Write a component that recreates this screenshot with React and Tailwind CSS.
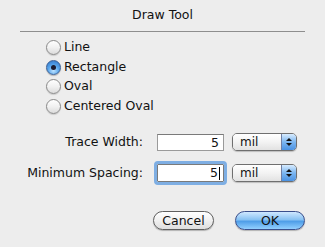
import React from 'react';

function Radio({ checked, label }) {
    return (
        <div className="flex items-center gap-[3px] h-[19.5px]">
            {checked ? (
                <span className="w-[15px] h-[15px] rounded-full border border-[#3a5f95] bg-[radial-gradient(circle_at_50%_75%,#bfe3ff_0%,#5aa7ec_45%,#2b6fc5_100%)] flex items-center justify-center shadow-[0_1px_1px_rgba(0,0,0,0.25)]">
                    <span className="w-[5px] h-[5px] rounded-full bg-[#1b1b30]" />
                </span>
            ) : (
                <span className="w-[15px] h-[15px] rounded-full border border-[#8a8a8a] bg-[linear-gradient(#ffffff,#f1f1f1_50%,#dcdcdc)] shadow-[0_1px_1px_rgba(0,0,0,0.15)]" />
            )}
            <span>{label}</span>
        </div>
    );
}

function Select() {
    return (
        <div className="flex w-[65px] h-[18px] rounded-[5px] border border-[#6f6f6f] overflow-hidden shadow-[0_1px_1px_rgba(0,0,0,0.2)]">
            <span className="flex-1 pl-[7px] text-[12px] leading-[16px] bg-[linear-gradient(#ffffff,#f3f3f3_50%,#e2e2e2)]">mil</span>
            <span className="w-[15px] flex flex-col items-center justify-center gap-[2px] border-l border-[#6f7fa5] bg-[linear-gradient(#d8ecff,#7cb6f0_50%,#4a92e3)]">
                <svg width="6" height="3" viewBox="0 0 6 3"><path d="M0 3L3 0L6 3Z" fill="#111" /></svg>
                <svg width="6" height="3" viewBox="0 0 6 3"><path d="M0 0L3 3L6 0Z" fill="#111" /></svg>
            </span>
        </div>
    );
}

export default function App() {
    return (
        <div className="w-[325px] h-[247px] bg-[#ededed] text-[#111] font-['Lucida_Grande','DejaVu_Sans',sans-serif] text-[12.5px] flex flex-col">
            <div className="text-center pt-[7px] h-[24px] leading-[16px]">Draw Tool</div>
            <div className="mx-[20px] mt-[7px] border-t border-[#8e8e8e]" />
            <div className="flex flex-col pl-[46px] mt-[6px]">
                <Radio label="Line" />
                <Radio label="Rectangle" checked />
                <Radio label="Oval" />
                <Radio label="Centered Oval" />
            </div>
            <div className="grid grid-cols-[143px_67px_65px] items-center gap-x-[14px] mt-[17px]">
                <div className="text-right">Trace Width:</div>
                <div className="h-[17px] border border-[#9a9a9a] border-t-[#7a7a7a] bg-white text-right pr-[4px] leading-[15px]">5</div>
                <div className="-ml-[6px]"><Select /></div>
            </div>
            <div className="grid grid-cols-[143px_67px_65px] items-center gap-x-[14px] mt-[12px]">
                <div className="text-right">Minimum Spacing:</div>
                <div className="h-[18px] border border-[#7a7a7a] bg-white text-right pr-[3px] leading-[16px] outline-[3px] outline-[#7eaee3] rounded-[1px] flex justify-end items-center">
                    <span>5</span><span className="w-px h-[13px] bg-black ml-px" />
                </div>
                <div className="-ml-[6px]"><Select /></div>
            </div>
            <div className="flex justify-end gap-[21px] pr-[20px] mt-[28px]">
                <button className="w-[61px] h-[19px] rounded-full border border-[#5f5f5f] bg-[linear-gradient(#ffffff,#f0f0f0_50%,#dedede)] text-[12.5px] leading-[17px] shadow-[0_1px_1px_rgba(0,0,0,0.25)]">Cancel</button>
                <button className="w-[70px] h-[19px] rounded-full border border-[#3a4f8c] bg-[linear-gradient(#cfe8ff,#88c2f3_45%,#4f9ee8_55%,#92d0ff)] text-[12.5px] leading-[17px] shadow-[0_1px_1px_rgba(0,0,0,0.25)]">OK</button>
            </div>
        </div>
    );
}
